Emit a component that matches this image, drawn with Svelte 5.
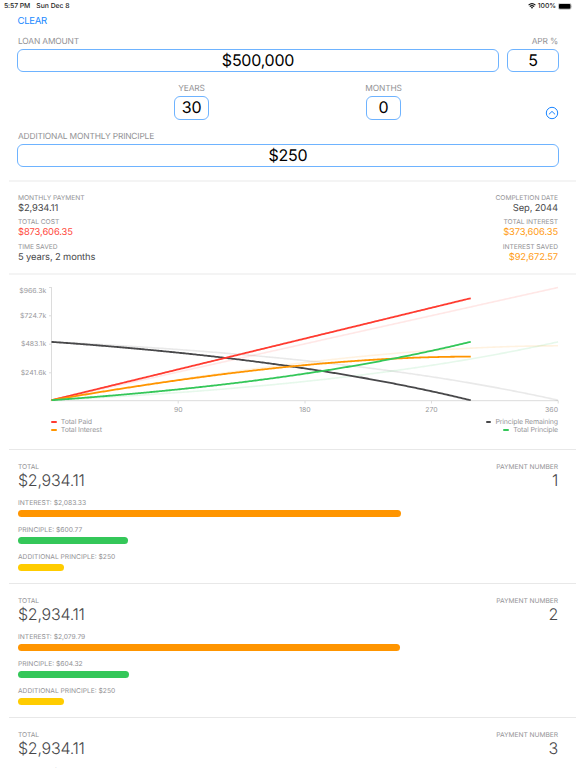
<script>
  const principal = 500000;
  const rate = 0.05 / 12;
  const basePayment = 2684.11;

  const left = 51.5;
  const right = 558;
  const base = 125.2;
  const top = 12.5;
  const maxValue = 966279;

  const px = (month) => left + (month / 360) * (right - left);
  const py = (value) => base - (value / maxValue) * (base - top);

  function amortize(extra) {
    let remaining = principal;
    let interest = 0;
    let paid = 0;
    const rows = [{ month: 0, paid, interest, remaining, principle: 0 }];
    for (let month = 1; month <= 360 && remaining > 1; month++) {
      const due = remaining * rate;
      const pay = Math.min(basePayment + extra, remaining + due);
      interest += due;
      paid += pay;
      remaining = Math.max(0, remaining + due - pay);
      rows.push({ month, paid, interest, remaining, principle: principal - remaining });
    }
    return rows;
  }

  const path = (rows, key) =>
    rows.map((r, i) => `${i ? 'L' : 'M'}${px(r.month).toFixed(2)} ${py(r[key]).toFixed(2)}`).join('');

  const series = [
    { key: 'remaining', color: '#48484a' },
    { key: 'paid', color: '#ff3b30' },
    { key: 'interest', color: '#ff9500' },
    { key: 'principle', color: '#34c759' }
  ];
  const original = amortize(0);
  const current = amortize(250);

  const yTicks = [
    { label: '$966.3k', y: 12.5, ty: 18.4 },
    { label: '$724.7k', y: 40.8, ty: 43.3 },
    { label: '$483.1k', y: 69.2, ty: 71.4 },
    { label: '$241.6k', y: 97.8, ty: 100.3 }
  ];
  const xTicks = [
    { label: '90', x: 178.2 },
    { label: '180', x: 305 },
    { label: '270', x: 431.5 }
  ];

  const leftStats = [
    { label: 'MONTHLY PAYMENT', value: '$2,934.11', tone: 'dark' },
    { label: 'TOTAL COST', value: '$873,606.35', tone: 'red' },
    { label: 'TIME SAVED', value: '5 years, 2 months', tone: 'dark' }
  ];
  const rightStats = [
    { label: 'COMPLETION DATE', value: 'Sep, 2044', tone: 'dark' },
    { label: 'TOTAL INTEREST', value: '$373,606.35', tone: 'orange' },
    { label: 'INTEREST SAVED', value: '$92,672.57', tone: 'orange' }
  ];

  const payments = [
    { n: 1, interest: 2083.33, principle: 600.77 },
    { n: 2, interest: 2079.79, principle: 604.32 },
    { n: 3, interest: 2076.23, principle: 607.88 }
  ];
  const money = (v) => '$' + v.toLocaleString('en-US');
  const barWidth = (v) => v * 0.1839;
</script>

<div class="screen">
  <header class="status">
    <span class="time">5:57 PM</span>
    <span class="date">Sun Dec 8</span>
    <span class="power">
      <svg class="wifi" width="8" height="6" viewBox="0 0 8 6">
        <path d="M.6 2.2Q4-.9 7.4 2.2M1.8 3.6Q4 1.7 6.2 3.6" fill="none" stroke="#111" stroke-width="1.15" />
        <path d="M2.8 4.4Q4 3.4 5.2 4.4L4 5.8Z" fill="#111" />
      </svg>
      <span class="pct">100%</span>
      <svg width="15" height="7" viewBox="0 0 15 7">
        <rect x=".3" y=".3" width="12.8" height="6.1" rx="1.7" fill="none" stroke="#999" stroke-width=".5" />
        <rect x=".9" y=".9" width="11.6" height="4.9" rx="1" fill="#000" />
        <path d="M13.7 2.4Q14.6 3.4 13.7 4.4Z" fill="#999" />
      </svg>
    </span>
  </header>

  <section class="form">
    <button class="clear">CLEAR</button>
    <div class="row labels"><span>LOAN AMOUNT</span><span class="apr">APR %</span></div>
    <div class="row fields">
      <div class="field wide">$500,000</div>
      <div class="field rate">5</div>
    </div>
    <div class="row term">
      <div class="unit"><span class="cap">YEARS</span><div class="field">30</div></div>
      <div class="unit"><span class="cap">MONTHS</span><div class="field">0</div></div>
      <svg class="toggle" width="14" height="14" viewBox="0 0 14 14" fill="none" stroke="#1a85ff">
        <circle cx="7" cy="7" r="5.7" />
        <path d="M4.2 8.1L7 5.4L9.8 8.1" stroke-linecap="round" stroke-linejoin="round" />
      </svg>
    </div>
    <div class="row labels extra"><span>ADDITIONAL MONTHLY PRINCIPLE</span></div>
    <div class="field">$250</div>
  </section>
  <div class="rule thick"></div>

  <section class="stats">
    {#each [leftStats, rightStats] as column, i}
      <div class="column" class:end={i === 1}>
        {#each column as s}
          <div class="stat"><span class="mini">{s.label}</span><span class="value {s.tone}">{s.value}</span></div>
        {/each}
      </div>
    {/each}
  </section>
  <div class="rule thick"></div>

  <section class="chart">
    <svg width="576" height="140" viewBox="0 0 576 140">
      <path d="M51.5 12V126M50.5 125.7H558.5" fill="none" stroke="#dcdcdc" />
      {#each yTicks as t}
        <path d="M49 {t.y}H51.5" stroke="#dcdcdc" />
        <text x="46.2" y={t.ty} text-anchor="end">{t.label}</text>
      {/each}
      {#each xTicks as t}
        <path d="M{t.x} 126V128.5" stroke="#dcdcdc" />
        <text x={t.x} y="137.4" text-anchor="middle">{t.label}</text>
      {/each}
      <path d="M558.2 126V128.5" stroke="#dcdcdc" />
      <text x="558" y="137.4" text-anchor="end">360</text>
      {#each series as s}
        <path d={path(original, s.key)} fill="none" stroke={s.color} stroke-width="1.6" opacity=".12" />
      {/each}
      {#each series as s}
        <path d={path(current, s.key)} fill="none" stroke={s.color} stroke-width="1.8" />
      {/each}
    </svg>
    <div class="legend">
      <div class="keys">
        <span><i class="bg-red"></i><b>Total Paid</b></span>
        <span><i class="bg-orange"></i><b>Total Interest</b></span>
      </div>
      <div class="keys end">
        <span><i class="bg-dark"></i><b>Principle Remaining</b></span>
        <span><i class="bg-green"></i><b>Total Principle</b></span>
      </div>
    </div>
  </section>
  <div class="rule"></div>

  {#each payments as p}
    <section class="payment">
      <div class="row head">
        <div class="total"><span class="mini">TOTAL</span><span class="big">$2,934.11</span></div>
        <div class="total end"><span class="mini">PAYMENT NUMBER</span><span class="big">{p.n}</span></div>
      </div>
      <div class="part"><span class="mini">INTEREST: {money(p.interest)}</span><div class="bar bg-orange" style:width="{barWidth(p.interest)}px"></div></div>
      <div class="part"><span class="mini">PRINCIPLE: {money(p.principle)}</span><div class="bar bg-green" style:width="{barWidth(p.principle)}px"></div></div>
      <div class="part"><span class="mini">ADDITIONAL PRINCIPLE: $250</span><div class="bar bg-yellow" style:width="{barWidth(250)}px"></div></div>
    </section>
    <div class="rule"></div>
  {/each}
</div>

<style>
  :global(body) { margin: 0; background: #fff; overflow: hidden; }
  .screen { width: 576px; height: 768px; overflow: hidden; background: #fff; font-family: Inter, "Liberation Sans", sans-serif; color: #000; text-rendering: geometricPrecision; }
  .screen * { box-sizing: border-box; }
  span, b { white-space: nowrap; }
  .row { display: flex; justify-content: space-between; }
  .rule { height: 1px; margin-left: 9px; background: #e8e8e8; }
  .rule.thick { height: 2px; background: #f4f4f4; }

  .status { height: 12px; display: flex; align-items: center; padding: 0 3px 0 4px; font-size: 6.8px; font-weight: 500; color: #222; line-height: 12px; }
  .time { letter-spacing: -.1px; }
  .date { margin-left: 6.3px; letter-spacing: -.02px; }
  .power { margin-left: auto; display: flex; align-items: center; }
  .pct { margin: 0 2px 0 2px; letter-spacing: -.05px; }

  .form { height: 168px; padding: 0 17px; display: flex; flex-direction: column; }
  .clear { align-self: flex-start; border: 0; padding: 0 .5px; margin: 3px 0 0; background: none; color: #218aff; font: 400 9.6px/12px Inter, "Liberation Sans", sans-serif; letter-spacing: -.3px; height: 12px; }
  .labels { height: 12px; margin: 8px 1px 0; font-size: 8.4px; line-height: 14px; color: #929295; letter-spacing: -.16px; }
  .fields { margin-top: 2px; gap: 8px; }
  .field { height: 23.4px; border: 1px solid #6eb3ff; border-radius: 6px; text-align: center; font-size: 16px; line-height: 21.4px; letter-spacing: -.25px; }
  .wide { flex: 1; }
  .rate { width: 52px; }
  .term { height: 47px; margin-top: 11px; }
  .unit { display: flex; flex-direction: column; align-items: center; width: 35px; margin-left: 157px; }
  .cap { height: 12px; font-size: 8.4px; line-height: 13px; color: #929295; margin-bottom: 1px; letter-spacing: -.16px; }
  .unit .field { width: 35px; }
  .toggle { margin: 22.5px 0 0 auto; }
  .extra { margin-top: 0; }
  .extra + .field { margin-top: 2px; height: 23px; line-height: 20.6px; }

  .stats { height: 91px; padding: 12px 18px 0; display: flex; justify-content: space-between; }
  .column { display: flex; flex-direction: column; }
  .stat { height: 24.4px; display: flex; flex-direction: column; }
  .end { align-items: flex-end; text-align: right; }
  .mini { font-size: 6.7px; line-height: 9px; color: #929295; letter-spacing: -.05px; }
  .value { font-size: 9.4px; line-height: 11px; letter-spacing: -.12px; }
  .dark { color: #48484a; }
  .red { color: #ff4b41; }
  .orange { color: #ff9d17; }

  .chart { height: 174px; }
  .chart svg { display: block; }
  .chart text { font-size: 6.9px; fill: #98989b; }
  .legend { display: flex; justify-content: space-between; padding: 3px 18px 0 51px; }
  .keys { display: flex; flex-direction: column; }
  .keys span { display: flex; align-items: center; height: 8.3px; }
  .keys i { width: 5.5px; height: 2px; border-radius: 1px; margin-right: 4.3px; }
  .keys b { font-size: 7px; line-height: 8px; font-weight: 400; color: #98989b; letter-spacing: -.14px; }

  .payment { height: 133px; padding: 13px 18px 0; }
  .head { height: 36px; }
  .total { display: flex; flex-direction: column; }
  .big { font-size: 16px; line-height: 16px; font-weight: 300; color: #48484a; letter-spacing: -.25px; }
  .part { height: 27px; }
  .part .mini { display: block; letter-spacing: 0; }
  .bar { height: 7px; border-radius: 3.5px; margin-top: 2px; }
  .bg-red { background: #ff3b30; }
  .bg-orange { background: #ff9500; }
  .bg-dark { background: #48484a; }
  .bg-green { background: #34c759; }
  .bg-yellow { background: #ffcc00; }
</style>
